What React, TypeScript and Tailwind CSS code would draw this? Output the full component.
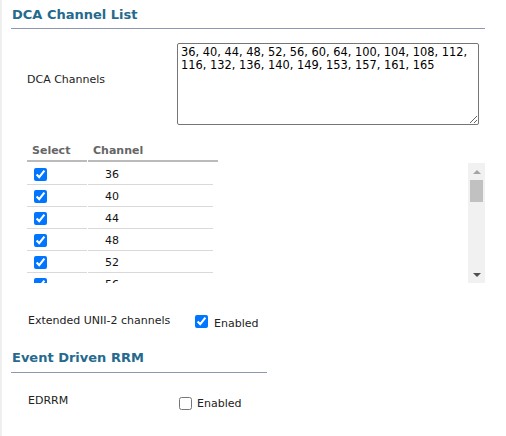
const channels = [36, 40, 44, 48, 52, 56];

const dcaText =
  "36, 40, 44, 48, 52, 56, 60, 64, 100, 104, 108, 112, 116, 132, 136, 140, 149, 153, 157, 161, 165";

function SectionTitle({ title, width, pb }: { title: string; width: string; pb: string }) {
  return (
    <div className={`ml-[9px] ${width} ${pb} border-b border-[#8e97b0] pl-[1px]`}>
      <h2 className="text-[13px] leading-[16px] font-bold text-[#256a8e]">{title}</h2>
    </div>
  );
}

export default function App() {
  return (
    <div
      className="w-[506px] h-[436px] overflow-hidden border-l-2 border-[#efefef] bg-white text-[11px] leading-[14px] text-[#222]"
      style={{ fontFamily: '"DejaVu Sans", Verdana, sans-serif' }}
    >
      <div className="pt-[7px]">
        <div className="ml-[9px] w-[474px] pb-[5px] border-b border-[#8e97b0] pl-[1px]">
          <h2 className="text-[13px] leading-[16px] font-bold text-[#256a8e]">DCA Channel List</h2>
        </div>
      </div>

      <div className="mt-[14px] ml-[25px] flex items-start">
        <span className="w-[150px] mt-[30px]">DCA Channels</span>
        <textarea
          readOnly
          defaultValue={dcaText}
          className="w-[302px] h-[82px] border border-[#767676] rounded-[2px] pt-[2px] pl-[3px] pr-[2px] text-[11.4px] leading-[13px] text-black outline-none"
          style={{ fontFamily: '"DejaVu Sans", Verdana, sans-serif' }}
        />
      </div>

      <div className="mt-[19px] ml-[25px] flex gap-[1px] w-[191px] font-bold text-[#666]">
        <div className="w-[60px] pl-[5px] pb-[2px] border-b-2 border-[#bbbbbb]">Select</div>
        <div className="flex-1 pl-[5px] pb-[2px] border-b-2 border-[#bbbbbb]">Channel</div>
      </div>

      <div className="mt-[1px] ml-[25px] w-[458px] h-[120px] flex">
        <div className="flex-1 overflow-hidden">
          {channels.map((ch) => (
            <div key={ch} className="flex gap-[1px] w-[186px] h-[22px]">
              <div className="w-[60px] border-b border-[#d9d9d9] flex items-center pl-[7px]">
                <input type="checkbox" checked readOnly className="w-[13px] h-[13px] mt-[1px] accent-[#0075ff]" />
              </div>
              <div className="flex-1 border-b border-[#d9d9d9] flex items-center pl-[17px] pt-[2px] text-[#111]">
                {ch}
              </div>
            </div>
          ))}
        </div>
        <div className="w-[17px] bg-[#f1f1f1] flex flex-col">
          <div className="h-[17px] flex items-center justify-center">
            <svg width="8" height="4" viewBox="0 0 8 4">
              <polygon points="0,4 4,0 8,4" fill="#a3a3a3" />
            </svg>
          </div>
          <div className="h-[22px] mx-[2px] bg-[#c1c1c1]" />
          <div className="flex-1" />
          <div className="h-[17px] flex items-center justify-center">
            <svg width="8" height="4" viewBox="0 0 8 4">
              <polygon points="0,0 8,0 4,4" fill="#505050" />
            </svg>
          </div>
        </div>
      </div>

      <div className="mt-[31px] ml-[26px] flex items-start">
        <span className="w-[167px]">Extended UNII-2 channels</span>
        <input type="checkbox" checked readOnly className="w-[13px] h-[13px] mt-[1px] accent-[#0075ff]" />
        <span className="ml-[6px] mt-[3px]">Enabled</span>
      </div>

      <div className="mt-[19px]">
        <SectionTitle title="Event Driven RRM" width="w-[256px]" pb="pb-[6px]" />
      </div>

      <div className="mt-[21px] ml-[26px] flex items-start">
        <span className="w-[151px]">EDRRM</span>
        <input type="checkbox" readOnly className="w-[13px] h-[13px] mt-[3px]" />
        <span className="ml-[5px] mt-[3px]">Enabled</span>
      </div>
    </div>
  );
}
